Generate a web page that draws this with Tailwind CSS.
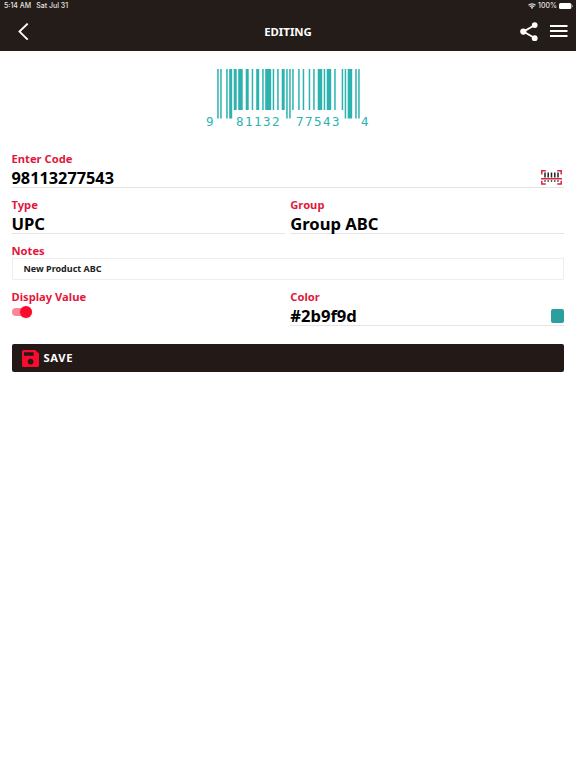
<!DOCTYPE html>
<html lang="en">
<head>
  <meta charset="UTF-8">
  <meta name="viewport" content="width=device-width, initial-scale=1.0">
  <title>Editing</title>
  <script src="https://cdn.jsdelivr.net/npm/@tailwindcss/browser@4"></script>
</head>
<body class="bg-white min-h-screen overflow-hidden font-['Noto_Sans',sans-serif] text-black">
  <!-- Header -->
  <header class="bg-[#231c18] h-[51px] text-white flex flex-col">
    <div class="h-3 pl-1 pr-[3px] flex items-center text-[7px] leading-3 font-['Inter',sans-serif] font-medium text-[#e6e4e2]">
      <span>5:14 AM</span>
      <span class="ml-[5px]">Sat Jul 31</span>
      <svg class="ml-auto w-2 h-[6px]" viewBox="0 0 16 12" fill="none" stroke="currentColor" stroke-width="2.4">
        <path d="M1 4.5a10 10 0 0 1 14 0M3.7 7.4a6 6 0 0 1 8.6 0"/>
        <path d="M8 12L5.6 9.4a3.4 3.4 0 0 1 4.8 0z" fill="currentColor" stroke="none"/>
      </svg>
      <span class="ml-[2px]">100%</span>
      <svg class="ml-[2px] w-[14px] h-[6px]" viewBox="0 0 14 6">
        <rect width="12.4" height="6" rx="1.6" fill="#fff"/>
        <rect x="13" y="2" width="1" height="2" rx=".5" fill="#999"/>
      </svg>
    </div>
    <div class="h-[39px] pl-[18px] pr-2 grid grid-cols-[48px_1fr_58px] items-center">
      <svg class="w-[11px] h-[18px]" viewBox="0 0 11 18" fill="none" stroke="#fff" stroke-width="1.9">
        <path d="M9.7 .6L1.5 8.6l8.2 8"/>
      </svg>
      <h1 class="text-center text-[11.4px] font-bold">EDITING</h1>
      <div class="flex items-center justify-between pl-[10px]">
        <svg class="w-[19px] h-5" viewBox="0 0 19 20" fill="#fff">
          <path d="M15 3L3.4 9.6L15 16.2" fill="none" stroke="#fff" stroke-width="1.8"/>
          <circle cx="14.7" cy="3.1" r="2.9"/>
          <circle cx="3.3" cy="9.6" r="3.1"/>
          <circle cx="14.7" cy="16.2" r="2.9"/>
        </svg>
        <svg class="w-[18px] h-[13px]" viewBox="0 0 18 13" fill="#fff">
          <path d="M0 0h17.5v2H0zM0 5h17.5v2H0zM0 10h17.5v2H0z"/>
        </svg>
      </div>
    </div>
  </header>

  <!-- Barcode preview -->
  <div class="flex justify-center h-[99px] pt-[18px]">
    <svg class="w-44 h-16 font-['DejaVu_Sans_Mono',monospace] text-[12.5px] tracking-[1.45px]" viewBox="0 0 176 64" fill="#2cb3af">
      <g id="bars"></g>
      <text x="6" y="57">9</text>
      <text x="36" y="57">81132</text>
      <text x="96" y="57">77543</text>
      <text x="161" y="57">4</text>
    </svg>
  </div>

  <!-- Form -->
  <main class="pl-[11.5px] pr-3">
    <div class="h-[38px] border-b border-[#e5e5e5]">
      <label class="block text-[11.2px] leading-[18px] font-bold text-[#e3173c]">Enter Code</label>
      <div class="flex items-center justify-between h-5 pr-[2px]">
        <span class="text-[16.3px] font-bold">98113277543</span>
        <svg class="w-[21px] h-[16px]" viewBox="0 0 21 16" fill="none">
          <path d="M.8 4.5V.8h4M16.2.8h4v3.7M.8 10.8v3.2h4M16.2 14h4v-3.2M0 8.8h21" stroke="#d82742" stroke-width="1.5"/>
          <path d="M4 2.5v5M7.2 2.5v5M10.5 2.5v5M13.8 2.5v5M17 2.5v5" stroke="#222" stroke-width="1.5"/>
          <path d="M4 10.3v1.5M7.2 10.3v1.5M10.5 10.3v1.5M13.8 10.3v1.5M17 10.3v1.5" stroke="#222" stroke-width="1.4"/>
        </svg>
      </div>
    </div>

    <div class="grid grid-cols-2 gap-x-[5px] pt-2">
      <div class="h-[38px] border-b border-[#e5e5e5]">
        <label class="block text-[11.2px] leading-[18px] font-bold text-[#e3173c]">Type</label>
        <div class="flex items-center h-5 text-[16.6px] font-bold">UPC</div>
      </div>
      <div class="h-[38px] border-b border-[#e5e5e5]">
        <label class="block text-[11.2px] leading-[18px] font-bold text-[#e3173c]">Group</label>
        <div class="flex items-center h-5 text-[16.6px] font-bold">Group ABC</div>
      </div>
    </div>

    <div class="pt-2">
      <label class="block text-[11.2px] leading-4 pt-px -mb-px font-bold text-[#e3173c]">Notes</label>
      <div class="h-[22px] border border-[#eeeeee] pl-[11px] flex items-center text-[9px] font-bold text-[#222]">New Product ABC</div>
    </div>

    <div class="grid grid-cols-2 gap-x-[5px] pt-2">
      <div>
        <label class="block text-[11.2px] leading-[18px] font-bold text-[#e3173c]">Display Value</label>
        <div class="flex items-center w-5 h-2 mt-[1.5px] rounded-full bg-[#ff8496] justify-end">
          <span class="w-3 h-3 shrink-0 rounded-full bg-[#fa0a2d] shadow-sm"></span>
        </div>
      </div>
      <div class="h-[38px] border-b border-[#e5e5e5]">
        <label class="block text-[11.2px] leading-[18px] font-bold text-[#e3173c]">Color</label>
        <div class="flex items-center justify-between h-5">
          <span class="text-[16.6px] font-bold">#2b9f9d</span>
          <span class="w-[13.5px] h-[14px] rounded-xs bg-[#2b9f9d]"></span>
        </div>
      </div>
    </div>

    <button class="mt-[18px] w-full h-7 bg-[#231a18] rounded-xs flex items-center pl-[10px] text-white text-[11.2px] font-bold tracking-[0.7px]">
      <svg class="w-[17px] h-[17px] mr-[5px]" viewBox="0 0 17 17">
        <path fill="#fa0a2d" fill-rule="evenodd" d="M1.5 0H13.3L17 3.6V15.5Q17 17 15.5 17H1.5Q0 17 0 15.5V1.5Q0 0 1.5 0zM2 2.2V5.8H11.6V2.2zM8.6 8.8a2.9 2.9 0 1 0 .01 0z"/>
      </svg>
      SAVE
    </button>
  </main>

<script>
  // UPC-A left-hand digit patterns, right-hand ones are inverted
  const codes = ['0001101', '0011001', '0010011', '0111101', '0100011', '0110001', '0101111', '0111011', '0110111', '0001011'];

  function drawBarcode(value) {
    const left = value.slice(0, 6).split('').map(d => codes[d]).join('');
    const right = value.slice(6).split('').map(d => codes[d].replace(/./g, b => 1 - b)).join('');
    const bits = '101' + left + '01010' + right + '101';
    const unit = 1.5;
    let rects = '';
    for (const m of bits.matchAll(/1+/g)) {
      const i = m.index;
      // Guard bars and the outer digits reach down to the text
      const tall = i < 10 || (i >= 45 && i < 50) || i >= 85;
      rects += `<rect x="${17.2 + i * unit}" y="0" width="${m[0].length * unit}" height="${tall ? 49.5 : 41}"/>`;
    }
    document.getElementById('bars').innerHTML = rects;
  }

  drawBarcode('981132775434');
</script>
</body>
</html>
